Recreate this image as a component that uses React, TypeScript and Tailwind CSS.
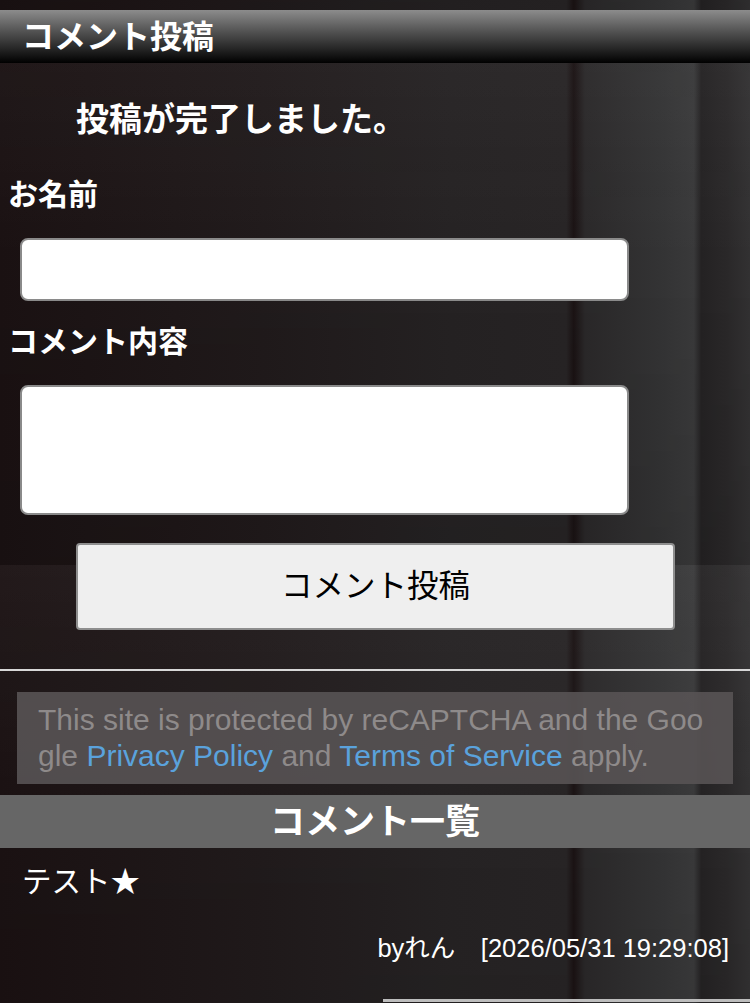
import React from "react";

const bgClass =
  "bg-[#201b1c] bg-[linear-gradient(180deg,rgba(255,255,255,0.04)_0%,rgba(0,0,0,0)_45%,rgba(0,0,0,0.08)_100%),linear-gradient(90deg,#1a1112_0%,#201a1b_35%,#252223_60%,#272425_75.5%,#1a1213_76.5%,#2a2829_78%,#333334_88%,#39393a_92.5%,#242223_93.5%,#2a2829_97%,#323132_100%)] bg-[length:100%_555px] bg-[position:0_10px] bg-repeat-y";

function App() {
  return (
    <div
      className={`min-h-screen w-full text-white ${bgClass}`}
      style={{ fontFamily: '"Liberation Sans", "Noto Sans CJK JP", sans-serif' }}
    >
      <div className="h-[10px]" />

      {/* post form header */}
      <h2 className="h-[53px] flex items-center pl-[22px] text-[32px] font-bold leading-none bg-[linear-gradient(180deg,#8c8c8c_0%,#5a5a5a_35%,#2a2a2a_70%,#000_100%)]">
        コメント投稿
      </h2>

      <p className="mt-[37px] pl-[76px] text-[33px] font-bold leading-[40px]">投稿が完了しました。</p>

      <label className="block mt-[35px] pl-[8px] text-[30px] font-bold leading-[40px]">お名前</label>
      <div className="mt-[23px] px-[20px] pr-[121px]">
        <input
          type="text"
          className="block w-full h-[63px] bg-white rounded-[8px] border-2 border-[#8a8a8a] outline-none text-black"
        />
      </div>

      <label className="block mt-[21px] pl-[8px] text-[30px] font-bold leading-[40px]">コメント内容</label>
      <div className="mt-[23px] px-[20px] pr-[121px]">
        <textarea className="block w-full h-[130px] bg-white rounded-[8px] border-2 border-[#8a8a8a] outline-none resize-none text-black" />
      </div>

      <div className="mt-[28px] pl-[76px] pr-[75px]">
        <button className="w-full h-[87px] bg-[#efefef] border-2 border-[#8e8e8e] rounded-[4px] text-black text-[31.5px] leading-none">
          コメント投稿
        </button>
      </div>

      <hr className="mt-[39px] border-0 h-[2px] bg-[#d8d8d8]" />

      {/* recaptcha notice */}
      <div className="mt-[21px] mx-[17px] h-[92px] bg-[#585354]/90 pl-[21px] pt-[10px] text-[30px] leading-[36px] text-[#8e8a8a] whitespace-nowrap overflow-hidden">
        <div>This site is protected by reCAPTCHA and the Goo</div>
        <div>
          gle <span className="text-[#5aa2dc]">Privacy Policy</span> and{" "}
          <span className="text-[#5aa2dc]">Terms of Service</span> apply.
        </div>
      </div>

      {/* comment list */}
      <h2 className="mt-[11px] h-[53px] flex items-center justify-center bg-[#666666] text-[35px] font-bold leading-none">
        コメント一覧
      </h2>

      <div className="mt-[14px] pl-[22px] text-[29.5px] leading-[40px]">テスト★</div>
      <div className="mt-[31px] pr-[21px] text-right text-[25.5px] leading-[30px]">
        byれん　[2026/05/31 19:29:08]
      </div>

      <div className="mt-[36px] ml-[383px] h-[3px] bg-[#bdbdbd]" />
      <div className="h-[40px]" />
    </div>
  );
}

export default App;
